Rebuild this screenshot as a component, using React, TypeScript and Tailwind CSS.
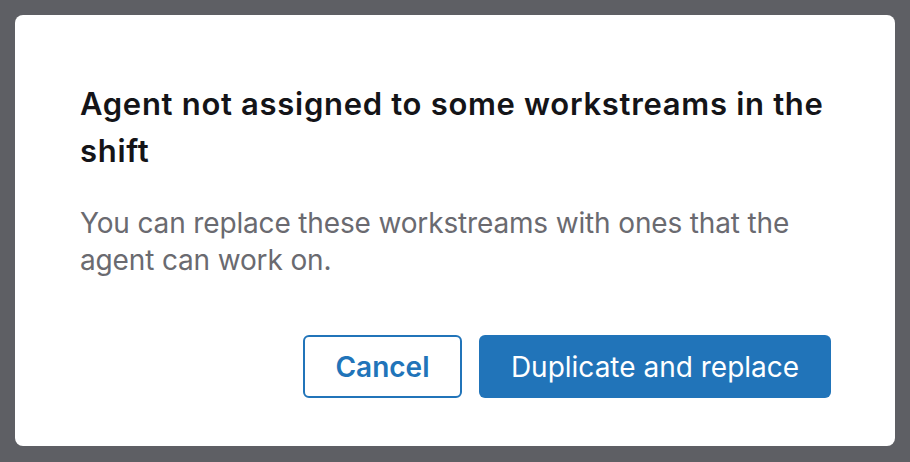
import React from "react";

export default function App() {
  return (
    <div
      className="w-[910px] h-[462px] bg-[#5e5f64] pt-[15px] pl-[15px]"
      style={{ fontFamily: "Inter, 'Noto Sans', sans-serif" }}
    >
      <div className="w-[880px] h-[431px] bg-white rounded-[8px] pt-[65px] pl-[65px] pr-[64px] flex flex-col">
        <h1 className="text-[31px] leading-[47px] font-semibold text-[#141418] tracking-[0.7px]">
          Agent not assigned to some workstreams in the shift
        </h1>
        <p className="mt-[31px] text-[28px] leading-[37px] text-[#6a6a70] tracking-[-0.15px]">
          You can replace these workstreams with ones that the agent can work on.
        </p>
        <div className="mt-[56px] flex justify-end gap-[17px]">
          <button className="w-[159px] h-[63px] rounded-[6px] border-2 border-[#2174b9] bg-white text-[#2174b9] text-[28px] font-semibold">
            Cancel
          </button>
          <button className="w-[352px] h-[63px] rounded-[6px] bg-[#2174b9] text-white text-[28px] font-normal">
            Duplicate and replace
          </button>
        </div>
      </div>
    </div>
  );
}
